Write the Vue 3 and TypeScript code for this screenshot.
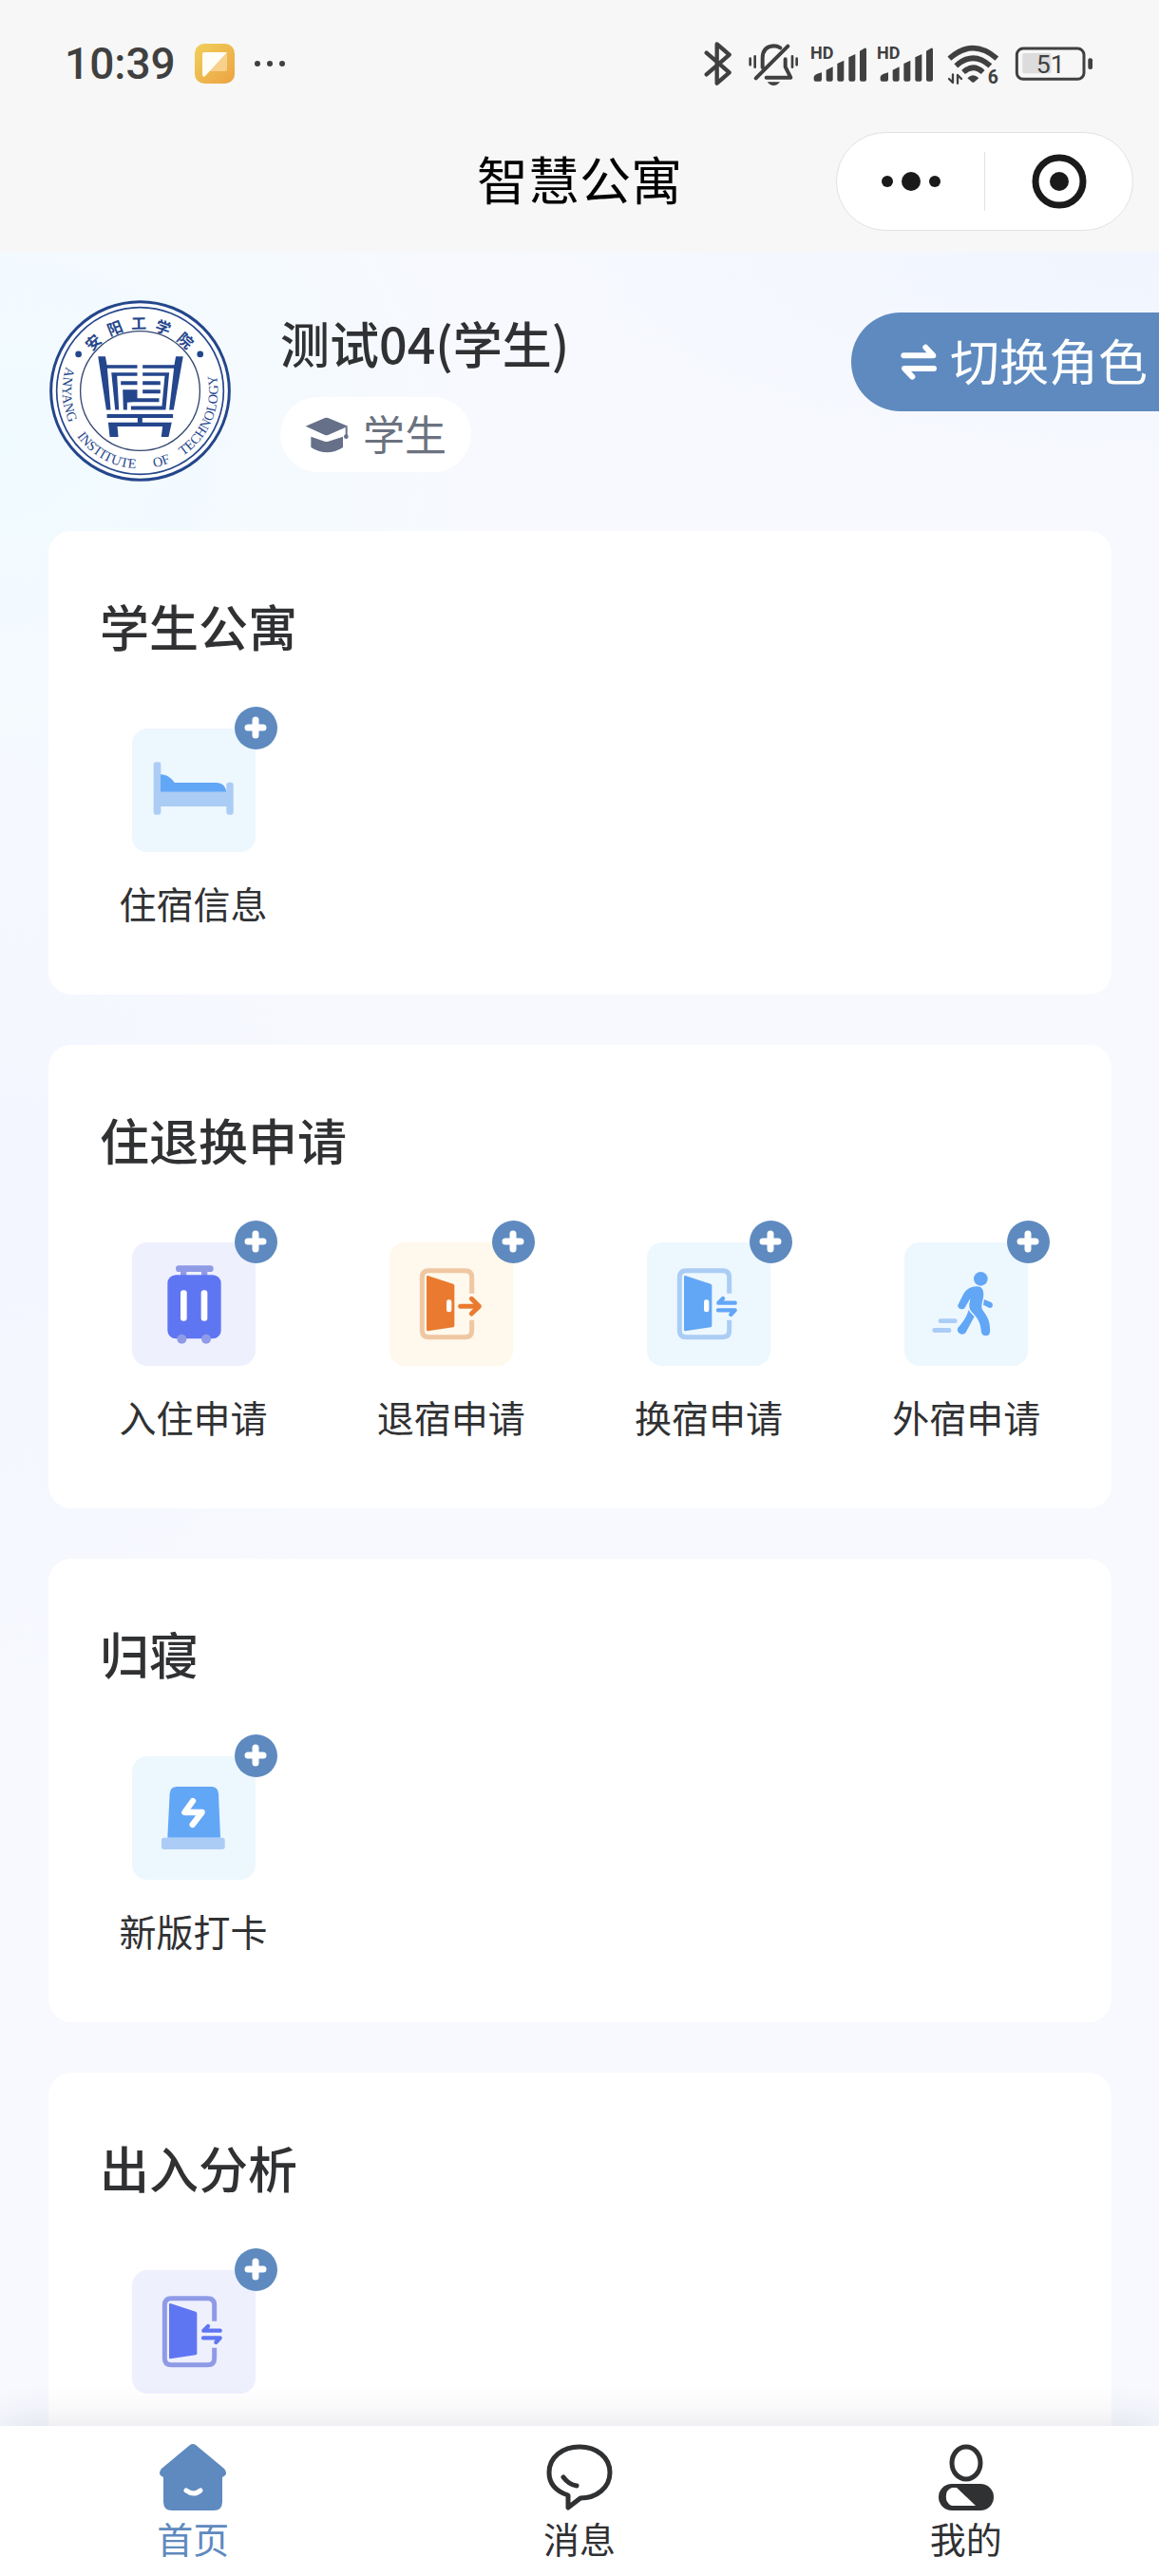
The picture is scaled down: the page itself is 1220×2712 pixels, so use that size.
<script setup lang="ts">
import { ref } from 'vue'

type IconName = 'bed' | 'luggage' | 'exit' | 'swap' | 'walk' | 'alarm' | 'gate'
type Tone = 'blue' | 'indigo' | 'orange'

interface Entry {
  label: string
  icon: IconName
  tone: Tone
}

interface Section {
  title: string
  entries: Entry[]
}

const sections: Section[] = [
  { title: '学生公寓', entries: [{ label: '住宿信息', icon: 'bed', tone: 'blue' }] },
  {
    title: '住退换申请',
    entries: [
      { label: '入住申请', icon: 'luggage', tone: 'indigo' },
      { label: '退宿申请', icon: 'exit', tone: 'orange' },
      { label: '换宿申请', icon: 'swap', tone: 'blue' },
      { label: '外宿申请', icon: 'walk', tone: 'blue' },
    ],
  },
  { title: '归寝', entries: [{ label: '新版打卡', icon: 'alarm', tone: 'blue' }] },
  { title: '出入分析', entries: [{ label: '', icon: 'gate', tone: 'indigo' }] },
]

const tabs = [
  { key: 'home', label: '首页' },
  { key: 'message', label: '消息' },
  { key: 'mine', label: '我的' },
]
const activeTab = ref('home')
</script>

<template>
  <div class="page">
    <header class="top">
      <div class="status">
        <span class="clock">10:39</span>
        <svg class="app-badge" viewBox="0 0 42 42" aria-hidden="true">
          <defs>
            <linearGradient id="badge" x1="0" y1="0" x2="1" y2="1">
              <stop offset="0" stop-color="#f0d05a" />
              <stop offset="1" stop-color="#eda243" />
            </linearGradient>
          </defs>
          <rect width="42" height="42" rx="10" fill="url(#badge)" />
          <path d="M14 9H32Q34 9 34 11V27Q34 29 32 29H16Z" fill="#f7d08c" />
          <path d="M8 11Q8 9 10 9H34L11 34Q8 36 8 32Z" fill="#fffdf6" />
        </svg>
        <svg class="more-dots" viewBox="0 0 34 8" aria-hidden="true">
          <circle cx="4" cy="4" r="3" /><circle cx="17" cy="4" r="3" /><circle cx="30" cy="4" r="3" />
        </svg>
        <svg class="indicators" viewBox="125 65 1236 150" aria-hidden="true">
          <path class="line" stroke-width="13" d="M136 106 208 168 169 202V78L208 112 136 174" />
          <g class="line">
            <path stroke-width="12" d="M313 152V123Q313 86 348 84Q360 84 369 90M292 186 393 85" />
            <path stroke-width="12" d="M385 126V150L402 184H325" />
            <path stroke-width="8" d="M274 124V144M289 117V151M407 117V151M421 124V144" />
          </g>
          <path d="M328 198H368Q360 209 348 209T328 198Z" />
          <g v-for="x in [0, 210]" :key="x">
            <text :x="464 + x" y="126" class="hd">HD</text>
            <path :transform="`translate(${x} 0)`" d="M475 182Q477 173 500 168V190Q500 196 494 196H481Q475 196 475 190ZM514 160 535 150V190Q535 196 529 196H520Q514 196 514 190ZM549 140 570 130V190Q570 196 564 196H555Q549 196 549 190ZM585 120 606 110V190Q606 196 600 196H591Q585 196 585 190ZM620 100 635 91Q641 89 641 96V190Q641 196 635 196H626Q620 196 620 190Z" />
          </g>
          <g class="line wifi" stroke-width="17">
            <path d="M903 124Q978 58 1053 124" /><path d="M924 147Q978 98 1032 147" /><path d="M947 167Q978 139 1009 167" />
          </g>
          <path d="M960 186Q978 168 996 186L982 198Q978 201 974 198Z" />
          <path class="line" stroke-width="7" d="M914 174V200L902 188M929 202V176L941 188" />
          <text x="1024" y="203" class="six">6</text>
          <rect x="1134" y="107" width="90" height="64" rx="6" fill="#dcdcdc" />
          <rect class="line" stroke-width="9" x="1116" y="92" width="212" height="97" rx="20" />
          <rect x="1341" y="123" width="14" height="35" rx="6" />
          <text x="1177" y="169" class="level">51</text>
        </svg>
      </div>
      <div class="navbar">
        <h1 class="title">智慧公寓</h1>
        <div class="capsule">
          <button type="button" aria-label="更多">
            <svg viewBox="0 0 62 22" width="62" height="22">
              <circle cx="6" cy="11" r="6" /><circle cx="31" cy="11" r="10" /><circle cx="56" cy="11" r="6" />
            </svg>
          </button>
          <button type="button" aria-label="关闭">
            <svg viewBox="0 0 58 58" width="58" height="58">
              <circle cx="29" cy="29" r="25" fill="none" stroke="#1a1a1a" stroke-width="7" /><circle cx="29" cy="29" r="10" />
            </svg>
          </button>
        </div>
      </div>
    </header>

    <main class="content">
      <section class="profile">
        <svg class="crest" viewBox="66 47 574 574" role="img" aria-label="安阳工学院">
          <circle cx="353" cy="334" r="282" fill="#fff" stroke="#24468c" stroke-width="9" />
          <circle cx="353" cy="334" r="264" fill="none" stroke="#24468c" stroke-width="5" />
          <circle cx="353" cy="334" r="189" fill="none" stroke="#33466f" stroke-width="4" />
          <g class="crest-cn">
            <text x="353" y="138" transform="rotate(-44 353 334)">安</text>
            <text x="353" y="138" transform="rotate(-22 353 334)">阳</text>
            <text x="353" y="138" transform="rotate(-1 353 334)">工</text>
            <text x="353" y="138" transform="rotate(20 353 334)">学</text>
            <text x="353" y="138" transform="rotate(42 353 334)">院</text>
          </g>
          <g fill="#24468c">
            <circle cx="158" cy="218" r="10" /><circle cx="543" cy="218" r="10" />
            <path d="M220 225H243L248 252H344V263H249L260 394H246ZM489 225H466L461 252H361V263H460L445 394H459Z" />
            <path d="M262 276H344V287H280L286 394H274ZM361 276H445L434 394H324V382H422L431 287H361Z" />
            <path d="M292 303H344V315H292ZM361 303H417V315H361ZM298 330H344V357H413V369H330L312 371V394H300ZM361 330H417V342H361Z" />
            <path d="M248 408H457V420H360V434H453L443 480H420L424 447H281L284 480H257L252 434H345V420H248Z" />
          </g>
          <g class="crest-en">
            <path id="crest-arc" d="M119 258A246 246 0 1 0 587 258" fill="none" />
            <text><textPath href="#crest-arc" startOffset="0">ANYANG</textPath></text>
            <text><textPath href="#crest-arc" startOffset="230">INSTITUTE</textPath></text>
            <text><textPath href="#crest-arc" startOffset="508">OF</textPath></text>
            <text><textPath href="#crest-arc" startOffset="606">TECHNOLOGY</textPath></text>
          </g>
        </svg>
        <div class="identity">
          <h2 class="name">测试04(学生)</h2>
          <span class="role">
            <svg viewBox="152 406 141 114" width="47" height="38" aria-hidden="true">
              <path d="M154 435 215 409Q220 407 225 409L288 435 225 463Q220 465 215 463ZM171 468 214 483Q220 485 226 483L272 468V502Q222 534 171 502Z" />
              <path d="M283 437V464" stroke="#667088" stroke-width="6" /><circle cx="282" cy="468" r="7" />
            </svg>
            <span>学生</span>
          </span>
        </div>
        <button type="button" class="switch">
          <svg viewBox="265 186 114 114" width="38" height="38" aria-hidden="true">
            <path d="M275 223H368L344 197M370 264H277L302 290" />
          </svg>
          <span>切换角色</span>
        </button>
      </section>

      <section v-for="section in sections" :key="section.title" class="card">
        <h2 class="card-title">{{ section.title }}</h2>
        <div class="grid">
          <button v-for="entry in section.entries" :key="entry.icon" type="button" class="entry">
            <span class="tile" :class="entry.tone">
              <svg viewBox="0 0 390 390" aria-hidden="true">
                <template v-if="entry.icon === 'bed'">
                  <g class="soft">
                    <rect x="68" y="106" width="23" height="166" rx="8" />
                    <path d="M89 200H300V246H89Z" />
                    <rect x="298" y="170" width="22" height="102" rx="8" />
                  </g>
                  <path class="solid" d="M90 145C110 145 126 158 134 171H265C285 171 295 182 298 200H90Z" />
                </template>
                <template v-else-if="entry.icon === 'luggage'">
                  <path class="soft" d="M148 73H247Q257 73 257 83T247 93H238V108H219V93H172V108H153V93H148Q138 93 138 83T148 73Z" />
                  <rect class="solid" x="112" y="103" width="169" height="201" rx="26" />
                  <rect x="153" y="151" width="20" height="97" rx="9" fill="#fff" />
                  <rect x="218" y="151" width="20" height="97" rx="9" fill="#fff" />
                  <circle class="soft" cx="157" cy="305" r="15" /><circle class="soft" cx="234" cy="305" r="15" />
                </template>
                <template v-else-if="entry.icon === 'walk'">
                  <rect class="soft" x="107" y="241" width="60" height="14" rx="7" />
                  <rect class="soft" x="88" y="270" width="60" height="15" rx="7" />
                  <g class="solid">
                    <circle cx="241" cy="115" r="22" />
                    <path d="M228 139C206 139 192 151 184 168L169 198C166 210 185 215 191 206L208 177C206 195 200 207 214 221C233 239 241 256 243 284C246 298 269 298 270 284C272 250 262 234 247 214C240 204 246 190 249 174C252 153 247 139 228 139Z" />
                    <path d="M203 213C197 235 185 251 169 270C162 284 182 297 193 286L221 234C213 227 207 221 203 213Z" />
                    <path d="M252 180 275 190Q281 195 278 202T267 206L249 197Z" />
                  </g>
                </template>
                <template v-else-if="entry.icon === 'alarm'">
                  <path class="solid" d="M112 257 119 118Q121 96 142 96H250Q271 96 273 118L279 257Z" />
                  <rect class="soft" x="93" y="257" width="200" height="37" rx="8" />
                  <path d="M192 141 166 177H221L191 216" fill="none" stroke="#fff" stroke-width="19" stroke-linecap="round" stroke-linejoin="round" />
                </template>
                <template v-else>
                  <path class="frame" d="M260 161V110Q260 89 239 89H124Q103 89 103 110V278Q103 299 124 299H239Q260 299 260 278V245" />
                  <path class="solid" d="M117 108Q117 104 121 105L201 131Q205 133 205 137V263Q205 267 201 268L121 280Q117 280 117 276Z" />
                  <rect v-if="entry.icon !== 'gate'" x="180" y="181" width="16" height="39" rx="7" fill="#fff" />
                  <path v-if="entry.icon === 'exit'" class="arrow" stroke-width="15" d="M224 202H281M259 178 283 202 259 225" />
                  <path v-else class="arrow" stroke-width="13" d="M278 191H226L240 177M225 214H278L265 228" />
                </template>
              </svg>
              <span class="plus" aria-hidden="true">
                <svg viewBox="0 0 45 45"><path d="M22 14V30M14 22H30" /></svg>
              </span>
            </span>
            <span class="label">{{ entry.label }}</span>
          </button>
        </div>
      </section>
    </main>

    <nav class="tabs">
      <button
        v-for="tab in tabs"
        :key="tab.key"
        type="button"
        class="tab"
        :class="{ active: tab.key === activeTab }"
        @click="activeTab = tab.key"
      >
        <svg viewBox="0 0 72 72" width="72" height="72" aria-hidden="true">
          <template v-if="tab.key === 'home'">
            <path d="M33 2Q36 0 39 2L69 27Q74 33 67 36V62Q67 71 58 71H14Q5 71 5 62V36Q-2 33 3 27Z" fill="currentColor" />
            <path d="M29 50Q37 56 44 50" fill="none" stroke="#fff" stroke-width="5" stroke-linecap="round" />
          </template>
          <g v-else-if="tab.key === 'message'" fill="none" stroke="currentColor" stroke-width="5" stroke-linejoin="round" stroke-linecap="round">
            <path d="M24 55C12 51 4 43 4 31C4 15 18 4 36 4S68 15 68 31S54 58 37 58L24 68Z" />
            <path d="M19 36Q25 44 33 45" />
          </g>
          <template v-else>
            <ellipse cx="36" cy="21" rx="15" ry="17" fill="none" stroke="currentColor" stroke-width="5" />
            <rect x="7" y="43" width="58" height="28" rx="14" fill="currentColor" />
            <path d="M26 47H21A9 10 0 0 0 21 66H46Z" fill="#fff" />
          </template>
        </svg>
        <span>{{ tab.label }}</span>
      </button>
    </nav>
  </div>
</template>

<style>
body {
  background: #f7f9fe;
}
</style>

<style scoped>
.page {
  display: flex;
  flex-direction: column;
  height: 100vh;
  font-family: 'Noto Sans CJK SC', sans-serif;
  color: #303133;
}

h1,
h2 {
  margin: 0;
  font-weight: 500;
}

button {
  padding: 0;
  border: 0;
  background: none;
  color: inherit;
  font: inherit;
  cursor: pointer;
}

svg {
  display: block;
  flex: none;
}

.top {
  flex: none;
  background: #f7f7f7;
}

.status {
  display: flex;
  align-items: center;
  height: 134px;
  padding: 0 68px;
  color: #404040;
  fill: #404040;
}

.clock {
  font: 500 46px/54px Roboto, sans-serif;
}

.app-badge {
  width: 42px;
  height: 42px;
  margin-left: 20px;
}

.more-dots {
  width: 34px;
  height: 8px;
  margin-left: 20px;
}

.indicators {
  width: 412px;
  height: 50px;
  margin-left: auto;
}

.line {
  fill: none;
  stroke: #404040;
  stroke-linecap: round;
  stroke-linejoin: round;
}

.wifi {
  stroke-linecap: butt;
}

.hd {
  font: 700 54px Roboto, sans-serif;
}

.six {
  font: 700 58px Roboto, sans-serif;
}

.level {
  font: 400 80px Roboto, sans-serif;
}

.navbar {
  display: grid;
  grid-template-columns: 1fr auto 1fr;
  align-items: center;
  padding: 5px 27px 22px;
}

.title {
  grid-column: 2;
  padding-bottom: 6px;
  font-size: 54px;
  font-weight: 400;
  line-height: 64px;
  color: #000;
}

.capsule {
  display: flex;
  align-items: center;
  justify-self: end;
  box-sizing: border-box;
  width: 313px;
  height: 104px;
  border: 1px solid #e2e2e2;
  border-radius: 52px;
  background: #fff;
  fill: #1a1a1a;
}

.capsule button {
  display: flex;
  flex: 1;
  align-items: center;
  justify-content: center;
  height: 62px;
  fill: inherit;
}

.capsule button + button {
  border-left: 1px solid #e2e2e2;
}

.content {
  flex: 1;
  min-height: 0;
  overflow-y: auto;
  scrollbar-width: none;
  background:
    radial-gradient(ellipse 500px 420px at 0 200px, #f0fbff, transparent),
    radial-gradient(ellipse 700px 240px at 100% 0, #f1f5ff, transparent),
    radial-gradient(ellipse 400px 600px at 0 1000px, #f3f6ff, transparent),
    #f7f9fe;
}

.profile {
  display: flex;
  align-items: flex-start;
  padding: 51px 0 52px 52px;
}

.crest {
  width: 191px;
  height: 191px;
}

.crest-cn {
  font: 700 48px 'Noto Sans CJK SC', sans-serif;
  text-anchor: middle;
  fill: #24468c;
}

.crest-en {
  font: 43px 'Liberation Serif', serif;
  fill: #24468c;
}

.identity {
  margin: 15px 0 0 52px;
}

.name {
  font-size: 52px;
  line-height: 60px;
}

.role {
  display: inline-flex;
  align-items: center;
  gap: 14px;
  height: 79px;
  margin-top: 27px;
  padding: 0 26px;
  border-radius: 40px;
  background: #fff;
  color: #6b7280;
  fill: #667088;
  font-size: 44px;
  line-height: 56px;
}

.role span,
.switch span {
  padding-bottom: 4px;
}

.switch {
  display: flex;
  align-items: center;
  gap: 14px;
  height: 104px;
  margin: 13px 0 0 auto;
  padding: 0 12px 0 52px;
  border-radius: 52px 0 0 52px;
  background: #5e8abf;
  color: #fff;
  font-size: 52px;
  line-height: 60px;
  white-space: nowrap;
}

.switch path {
  fill: none;
  stroke: #fff;
  stroke-width: 18;
  stroke-linecap: round;
  stroke-linejoin: round;
}

.card {
  margin: 0 50px 53px 51px;
  padding: 70px 17px 71px;
  border-radius: 24px;
  background: #fff;
}

.card-title {
  padding-left: 37px;
  font-size: 52px;
  line-height: 60px;
}

.grid {
  display: grid;
  grid-template-columns: repeat(4, 1fr);
  margin-top: 78px;
}

.entry {
  display: flex;
  flex-direction: column;
  align-items: center;
}

.tile {
  position: relative;
  width: 130px;
  height: 130px;
  border-radius: 16px;
}

.blue {
  --solid: #62a6f6;
  --soft: #abcdf5;
  background: #edf7fe;
}

.indigo {
  --solid: #5f76f3;
  --soft: #8f9be6;
  background: #eff0fe;
}

.orange {
  --solid: #ea7a30;
  --soft: #efc7a2;
  background: #fff8ec;
}

.solid {
  fill: var(--solid);
}

.soft {
  fill: var(--soft);
}

.frame {
  fill: none;
  stroke: var(--soft);
  stroke-width: 15;
}

.arrow {
  fill: none;
  stroke: var(--solid);
  stroke-linecap: round;
  stroke-linejoin: round;
}

.plus {
  position: absolute;
  top: -23px;
  right: -23px;
  width: 45px;
  height: 45px;
  border-radius: 50%;
  background: #5e8abf;
}

.plus path {
  stroke: #fff;
  stroke-width: 7;
  stroke-linecap: round;
}

.label {
  height: 52px;
  margin-top: 27px;
  font-size: 39px;
  line-height: 52px;
}

.tabs {
  position: relative;
  display: flex;
  flex: none;
  padding: 18px 0 14px;
  background: #fff;
  box-shadow: 0 -4px 40px rgba(40, 40, 90, 0.12);
}

.tab {
  display: flex;
  flex: 1;
  flex-direction: column;
  align-items: center;
  gap: 2px;
  font-size: 38px;
  line-height: 52px;
}

.tab.active {
  color: #5e8abf;
}
</style>
